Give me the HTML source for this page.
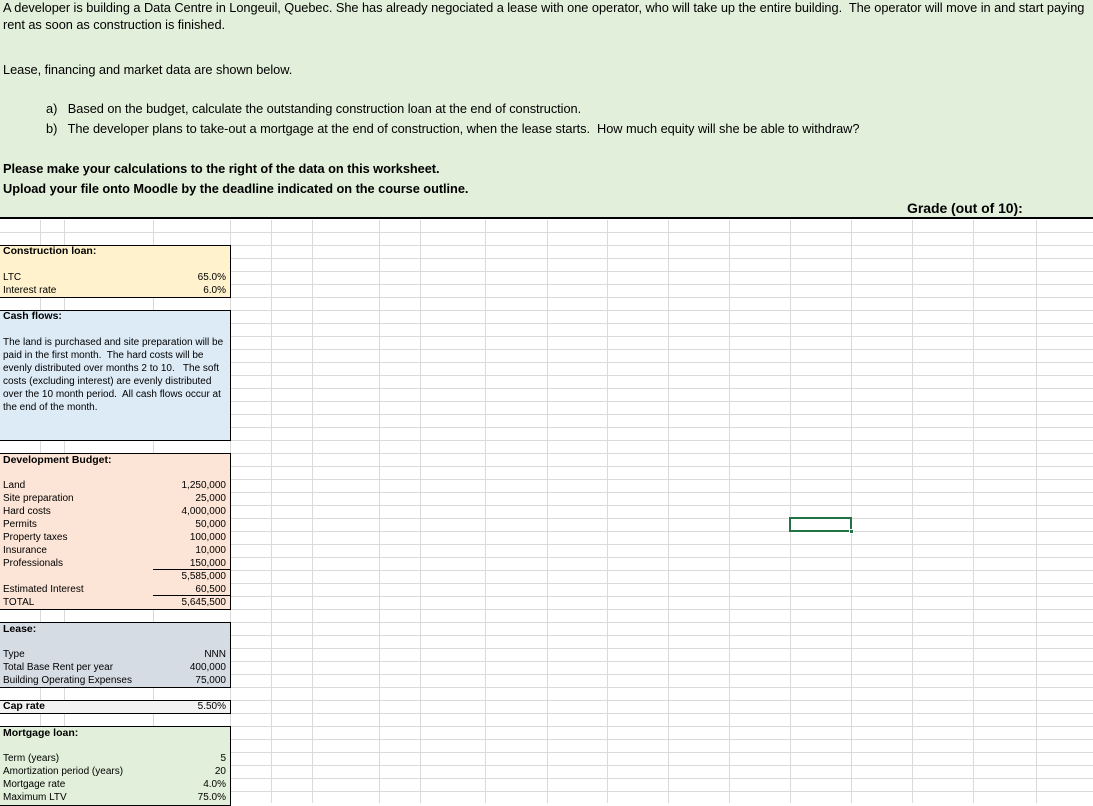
<!DOCTYPE html>
<html><head><meta charset="utf-8"><style>
*{margin:0;padding:0;box-sizing:border-box}
body{width:1093px;height:803px;position:relative;overflow:hidden;background:#fff;font-family:"Liberation Sans",sans-serif;color:#000}
#hdr{position:absolute;left:0;top:0;width:1093px;height:219px;background:#e2efda;border-bottom:2px solid #000}
.h{position:absolute;font-size:12.8px;white-space:nowrap;letter-spacing:-0.05px}
.b{font-weight:bold}
#grid{position:absolute;left:0;top:220px;width:1093px;height:583px;
background-image:repeating-linear-gradient(to bottom,transparent 0,transparent 12px,#dadada 12px,#dadada 13px);}
.vl{position:absolute;top:220px;width:1px;height:583px;background:#dadada}
.box{position:absolute;left:0;width:231px;border:1.5px solid #000;border-left:none}
.t{position:absolute;font-size:10px;white-space:nowrap;line-height:13px}
.r{text-align:right;right:4px}
.bt{font-weight:bold;font-size:10.5px}
.ul{position:absolute;height:1px;background:#000}
</style></head><body>
<div id="hdr">
<div class="h" style="left:3px;top:0px">A developer is building a Data Centre in Longeuil, Quebec. She has already negociated a lease with one operator, who will take up the entire building.&nbsp; The operator will move in and start paying</div>
<div class="h" style="left:3px;top:17px">rent as soon as construction is finished.</div>
<div class="h" style="left:3px;top:62px">Lease, financing and market data are shown below.</div>
<div class="h" style="left:46px;top:101px">a)&nbsp;&nbsp; Based on the budget, calculate the outstanding construction loan at the end of construction.</div>
<div class="h" style="left:46px;top:121px">b)&nbsp;&nbsp; The developer plans to take-out a mortgage at the end of construction, when the lease starts.&nbsp; How much equity will she be able to withdraw?</div>
<div class="h b" style="left:3px;top:161px">Please make your calculations to the right of the data on this worksheet.</div>
<div class="h b" style="left:3px;top:181px">Upload your file onto Moodle by the deadline indicated on the course outline.</div>
<div class="h b" style="left:907px;top:200px;font-size:14px">Grade (out of 10):</div>
</div>
<div id="grid"></div>
<div class="vl" style="left:40px"></div><div class="vl" style="left:64px"></div><div class="vl" style="left:153px"></div><div class="vl" style="left:230px"></div><div class="vl" style="left:271px"></div><div class="vl" style="left:312px"></div><div class="vl" style="left:379px"></div><div class="vl" style="left:420px"></div><div class="vl" style="left:485px"></div><div class="vl" style="left:547px"></div><div class="vl" style="left:607px"></div><div class="vl" style="left:668px"></div><div class="vl" style="left:729px"></div><div class="vl" style="left:790px"></div><div class="vl" style="left:851px"></div><div class="vl" style="left:912px"></div><div class="vl" style="left:973px"></div><div class="vl" style="left:1036px"></div>

<div class="box" style="top:245px;height:53px;background:#fff2cc">
<div class="t bt" style="left:3px;top:-1px">Construction loan:</div>
<div class="t" style="left:3px;top:25px">LTC</div><div class="t r" style="top:25px">65.0%</div>
<div class="t" style="left:3px;top:38px">Interest rate</div><div class="t r" style="top:38px">6.0%</div>
</div>

<div class="box" style="top:310px;height:131px;background:#ddebf7">
<div class="t bt" style="left:3px;top:-1px">Cash flows:</div>
<div class="t" style="left:3px;top:25px;font-size:10px">The land is purchased and site preparation will be<br>paid in the first month.&nbsp; The hard costs will be<br>evenly distributed over months 2 to 10.&nbsp;&nbsp; The soft<br>costs (excluding interest) are evenly distributed<br>over the 10 month period.&nbsp; All cash flows occur at<br>the end of the month.</div>
</div>

<div class="box" style="top:453px;height:157px;background:#fce4d6">
<div class="t bt" style="left:3px;top:0px">Development Budget:</div>
<div class="t" style="left:3px;top:25px">Land</div><div class="t r" style="top:25px">1,250,000</div>
<div class="t" style="left:3px;top:38px">Site preparation</div><div class="t r" style="top:38px">25,000</div>
<div class="t" style="left:3px;top:51px">Hard costs</div><div class="t r" style="top:51px">4,000,000</div>
<div class="t" style="left:3px;top:64px">Permits</div><div class="t r" style="top:64px">50,000</div>
<div class="t" style="left:3px;top:77px">Property taxes</div><div class="t r" style="top:77px">100,000</div>
<div class="t" style="left:3px;top:90px">Insurance</div><div class="t r" style="top:90px">10,000</div>
<div class="t" style="left:3px;top:103px">Professionals</div><div class="t r" style="top:103px">150,000</div>
<div class="ul" style="left:153px;width:77px;top:115px"></div>
<div class="t r" style="top:116px">5,585,000</div>
<div class="t" style="left:3px;top:129px">Estimated Interest</div><div class="t r" style="top:129px">60,500</div>
<div class="ul" style="left:153px;width:77px;top:141px"></div>
<div class="t" style="left:3px;top:142px">TOTAL</div><div class="t r" style="top:142px">5,645,500</div>
</div>

<div class="box" style="top:622px;height:66px;background:#d6dce4">
<div class="t bt" style="left:3px;top:0px">Lease:</div>
<div class="t" style="left:3px;top:25px">Type</div><div class="t r" style="top:25px">NNN</div>
<div class="t" style="left:3px;top:38px">Total Base Rent per year</div><div class="t r" style="top:38px">400,000</div>
<div class="t" style="left:3px;top:51px">Building Operating Expenses</div><div class="t r" style="top:51px">75,000</div>
</div>

<div class="box" style="top:700px;height:14px;background:#f2f2f2">
<div class="t bt" style="left:3px;top:-1px">Cap rate</div><div class="t r" style="top:-1px">5.50%</div>
</div>

<div class="box" style="top:726px;height:80px;background:#e2efda">
<div class="t bt" style="left:3px;top:0px">Mortgage loan:</div>
<div class="t" style="left:3px;top:25px">Term (years)</div><div class="t r" style="top:25px">5</div>
<div class="t" style="left:3px;top:38px">Amortization period (years)</div><div class="t r" style="top:38px">20</div>
<div class="t" style="left:3px;top:51px">Mortgage rate</div><div class="t r" style="top:51px">4.0%</div>
<div class="t" style="left:3px;top:64px">Maximum LTV</div><div class="t r" style="top:64px">75.0%</div>
</div>

<div style="position:absolute;left:789px;top:517px;width:63px;height:15px;border:2px solid #217346"></div>
<div style="position:absolute;left:849px;top:529px;width:5px;height:5px;background:#217346;border:1px solid #fff"></div>
</body></html>
